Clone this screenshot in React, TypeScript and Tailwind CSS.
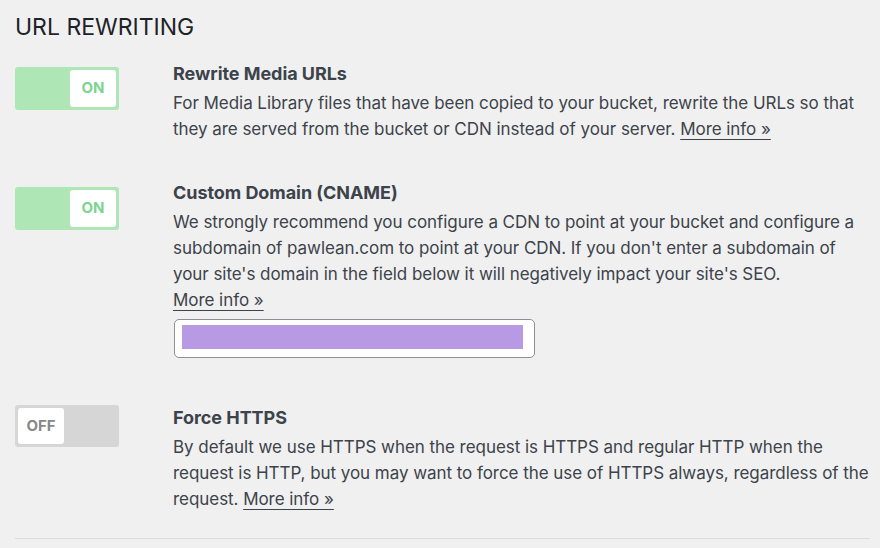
import React from "react";

function Toggle({ on }: { on: boolean }) {
  if (on) {
    return (
      <div className="flex h-[43px] w-[104px] justify-end rounded-[3px] bg-[#aee6b6] p-[3px]">
        <div className="flex h-full w-[46px] items-center justify-center rounded-[3px] bg-white text-[15px] font-bold text-[#7ed492]">
          ON
        </div>
      </div>
    );
  }
  return (
    <div className="flex h-[42px] w-[104px] justify-start rounded-[3px] bg-[#d6d6d6] p-[3px]">
      <div className="flex h-full w-[46px] items-center justify-center rounded-[3px] bg-white text-[15px] font-bold text-[#888888]">
        OFF
      </div>
    </div>
  );
}

function MoreInfo() {
  return <span className="underline decoration-[1px] underline-offset-[4px]">More info »</span>;
}

export default function App() {
  return (
    <div
      className="min-h-[548px] w-[880px] bg-[#f0f0f1] pl-[15px] pr-[4px] text-[#3c434a]"
      style={{ fontFamily: "Inter, 'Noto Sans', sans-serif" }}
    >
      <h1 className="pt-[13px] text-[23px] leading-[28px] font-normal text-[#1d2327]">URL REWRITING</h1>

      <div className="mt-[21px] flex">
        <div className="w-[158px] shrink-0 pt-[5px]">
          <Toggle on />
        </div>
        <div className="text-[17px] leading-[26px] tracking-[-0.05px]">
          <div className="text-[18px] leading-[24px] font-bold">Rewrite Media URLs</div>
          <p className="mt-[4px]">
            For Media Library files that have been copied to your bucket, rewrite the URLs so that they are served from
            the bucket or CDN instead of your server. <MoreInfo />
          </p>
        </div>
      </div>

      <div className="mt-[39px] flex">
        <div className="w-[158px] shrink-0 pt-[6px]">
          <Toggle on />
        </div>
        <div className="text-[17px] leading-[26px] tracking-[-0.05px]">
          <div className="text-[18px] leading-[24px] font-bold">Custom Domain (CNAME)</div>
          <p className="mt-[4px]">
            We strongly recommend you configure a CDN to point at your bucket and configure a subdomain of pawlean.com
            to point at your CDN. If you don't enter a subdomain of your site's domain in the field below it will
            negatively impact your site's SEO.
            <br />
            <MoreInfo />
          </p>
          <div className="mt-[6px] ml-[1px] flex h-[39px] w-[361px] items-start rounded-[5px] border border-[#8c8f94] bg-white pt-[5px] pl-[7px]">
            <div className="h-[24px] w-[341px] bg-[#b79ae3]" />
          </div>
        </div>
      </div>

      <div className="mt-[47px] flex">
        <div className="w-[158px] shrink-0">
          <Toggle on={false} />
        </div>
        <div className="text-[17px] leading-[26px] tracking-[-0.05px]">
          <div className="mt-[1px] text-[18px] leading-[24px] font-bold">Force HTTPS</div>
          <p className="mt-[4px]">
            By default we use HTTPS when the request is HTTPS and regular HTTP when the request is HTTP, but you may want
            to force the use of HTTPS always, regardless of the request. <MoreInfo />
          </p>
        </div>
      </div>

      <div className="mt-[26px] h-px w-[855px] bg-[#dcdcde]" />
    </div>
  );
}
